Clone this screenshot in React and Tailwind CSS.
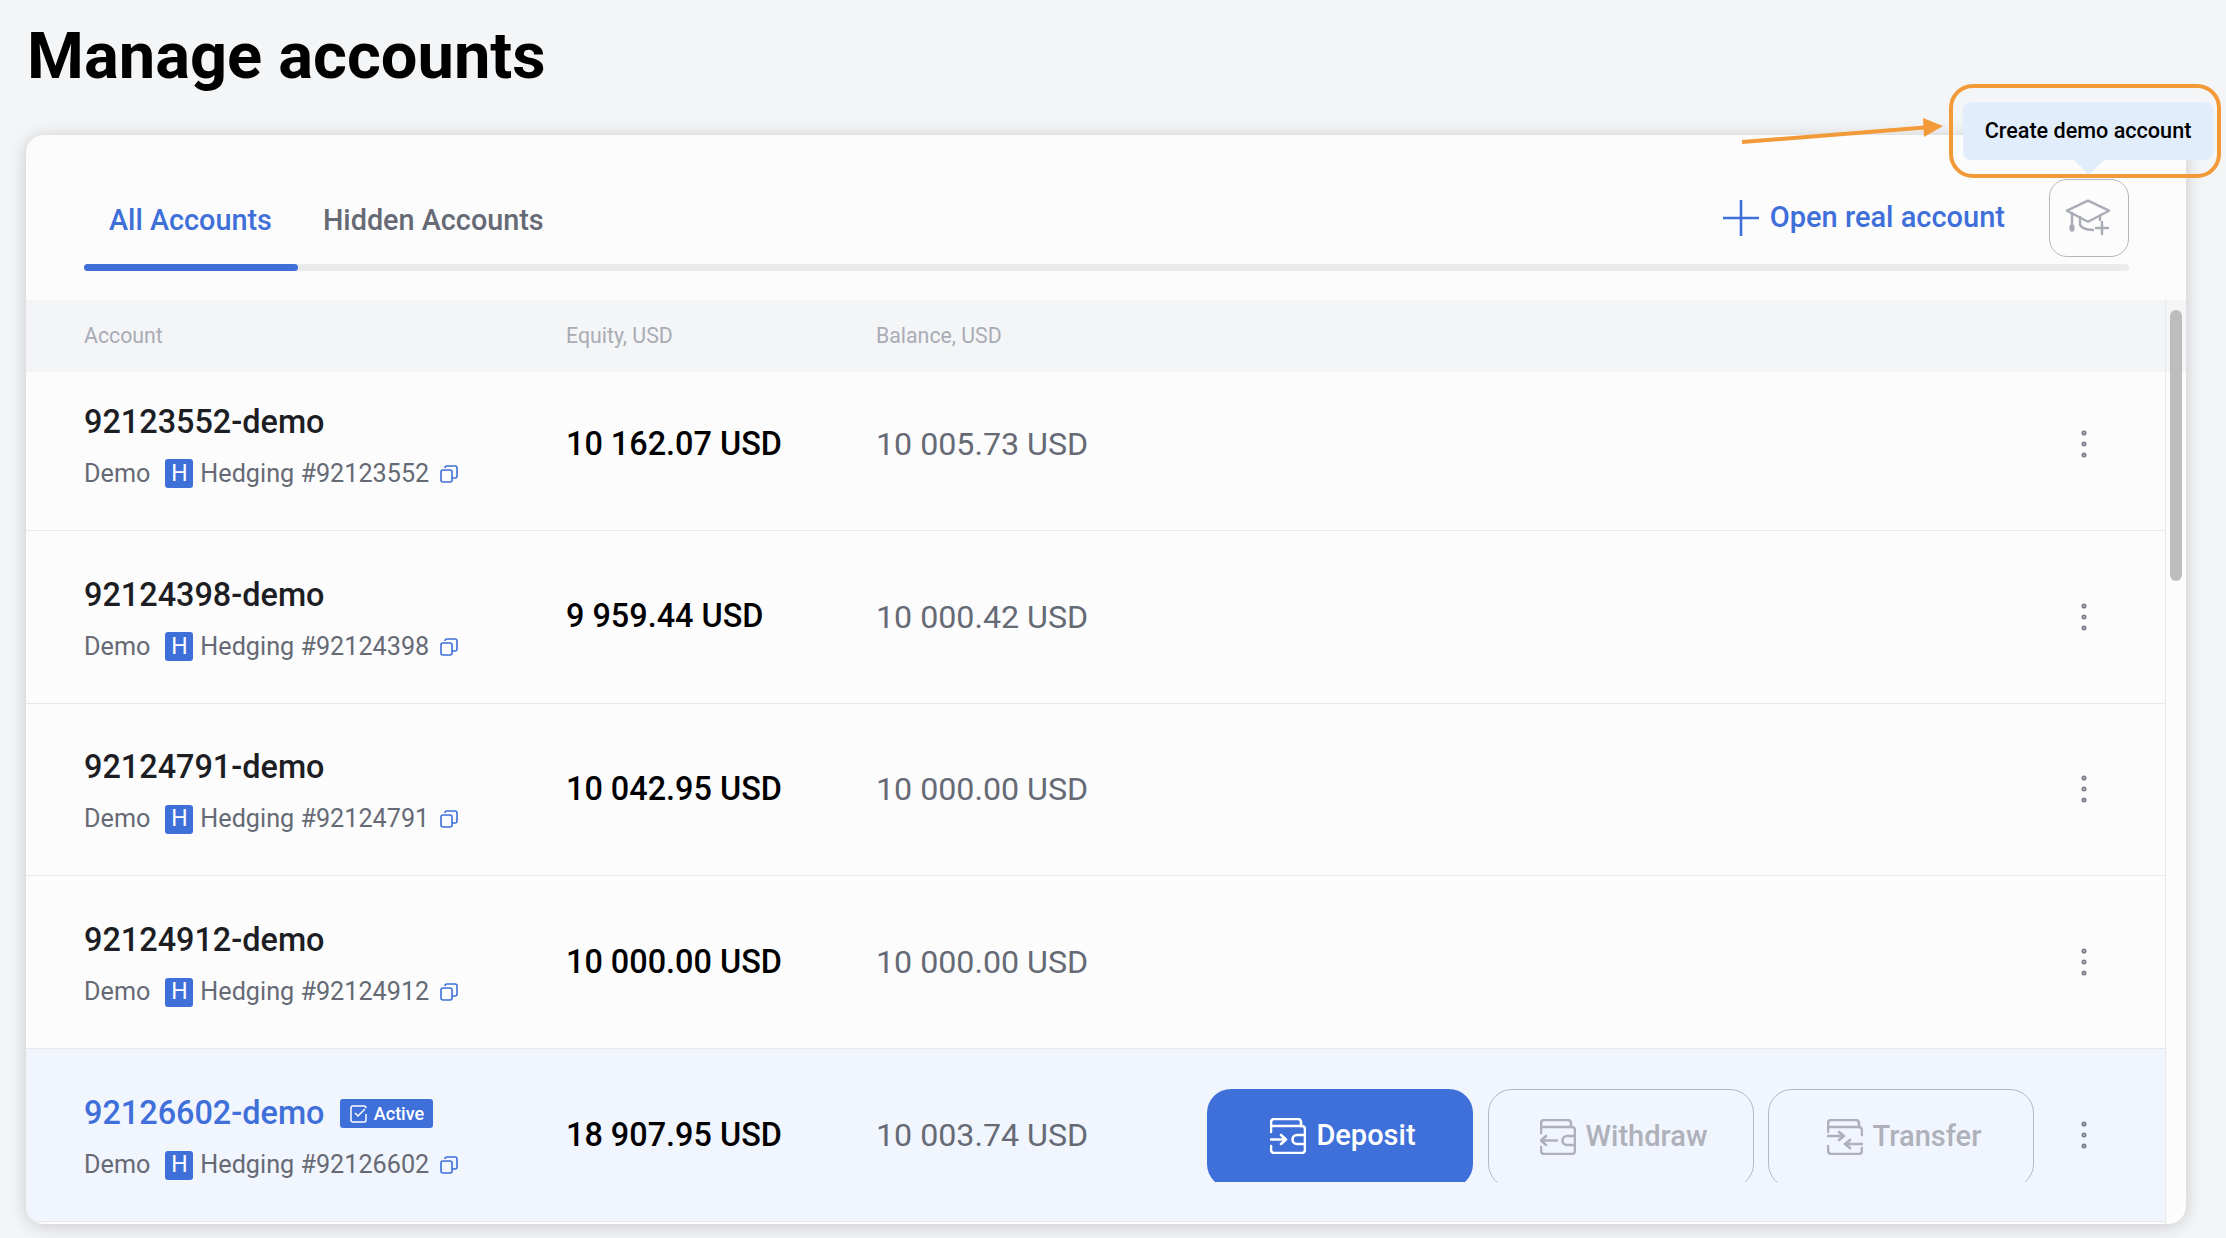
import { MoreVertical } from 'lucide-react'

const ROWS = [
  { name: '92123552-demo', id: '92123552', equity: '10 162.07 USD', balance: '10 005.73 USD' },
  { name: '92124398-demo', id: '92124398', equity: '9 959.44 USD', balance: '10 000.42 USD' },
  { name: '92124791-demo', id: '92124791', equity: '10 042.95 USD', balance: '10 000.00 USD' },
  { name: '92124912-demo', id: '92124912', equity: '10 000.00 USD', balance: '10 000.00 USD' },
  { name: '92126602-demo', id: '92126602', equity: '18 907.95 USD', balance: '10 003.74 USD', active: true },
]

function CopyIcon() {
  return (
    <svg width="18" height="18" viewBox="0 0 18 18" fill="none" stroke="#3f6fd9" strokeWidth="1.6" className="ml-[11px] shrink-0">
      <rect x="1" y="5" width="11" height="12" rx="2" />
      <path d="M5 3V3a2 2 0 0 1 2-2h8a2 2 0 0 1 2 2v8a2 2 0 0 1-2 2h-3" />
    </svg>
  )
}

function WalletIcon({ kind, color }) {
  return (
    <svg width="36" height="36" viewBox="20 13 36 36" fill="none" stroke={color} strokeWidth="2.6" strokeLinecap="round" strokeLinejoin="round" className="shrink-0">
      <path d="M21 27V17a3 3 0 0 1 3-3h24a3 3 0 0 1 3 3v4" />
      <path d="M21 21h31a3 3 0 0 1 3 3v6" />
      <path d="M55 30h-8a4.500 4.500 0 0 0 0 9h8z" />
      <path d="M55 39v6a3 3 0 0 1-3 3H24a3 3 0 0 1-3-3v-4" />
      {kind === 'in' && <path d="M21 34.500h14M31 30l5 4.500-5 4.500" />}
      {kind === 'out' && <path d="M37 34.500H22M26 30l-5 4.500 5 4.500" />}
    </svg>
  )
}

function TransferIcon({ color }) {
  return (
    <svg width="36" height="36" viewBox="11 13 36 36" fill="none" stroke={color} strokeWidth="2.6" strokeLinecap="round" strokeLinejoin="round" className="shrink-0">
      <path d="M12 26V17a3 3 0 0 1 3-3h25a3 3 0 0 1 3 3v4" />
      <path d="M12 21h31a3 3 0 0 1 3 3v5" />
      <path d="M12 40v5a3 3 0 0 0 3 3h28a3 3 0 0 0 3-3v-3" />
      <path d="M12 30h15M23 26l5 4-5 4" />
      <path d="M46 38H30M34 34l-5 4 5 4" />
    </svg>
  )
}

function ActionButton({ primary, icon, label }) {
  return (
    <div className="h-[93px] w-[266px] overflow-hidden">
      <button className={`flex h-[99px] w-full items-start justify-center gap-[10px] rounded-[24px] pt-[29px] pl-[6px] text-[29px] leading-[36px] font-medium ${primary ? 'bg-[#3f6fd9] text-white' : 'border border-[#b4b7c0] text-[#aeb1ba]'}`}>
        {icon}
        <span className="-mt-[1px]">{label}</span>
      </button>
    </div>
  )
}

function AccountRow({ row }) {
  return (
    <div className={`flex h-[172.8px] items-center border-b border-[#e6e8ec] pl-[58px] ${row.active ? 'bg-[#f1f5fd]' : ''}`}>
      <div className="w-[482px] shrink-0 pt-[6px]">
        <div className="flex items-center">
          <span className={`text-[32.4px] leading-[41px] font-medium ${row.active ? 'text-[#3f6fd9]' : 'text-[#1c1e24]'}`}>{row.name}</span>
          {row.active && (
            <span className="ml-[16px] flex h-[29px] w-[93px] items-center justify-center gap-[6px] rounded-[3px] bg-[#3f6fd9] text-[18px] font-medium text-white">
              <svg width="18" height="18" viewBox="0 0 18 18" fill="none" stroke="white" strokeWidth="1.5">
                <path d="M16 9v6a2 2 0 0 1-2 2H3a2 2 0 0 1-2-2V3a2 2 0 0 1 2-2h11a2 2 0 0 1 2 2" />
                <path d="M5 8l3 3 7-7" />
              </svg>
              Active
            </span>
          )}
        </div>
        <div className="mt-[13px] flex items-center text-[25.2px] leading-[36px] text-[#666a75]">
          <span>Demo</span>
          <span className="mr-[7px] ml-[15px] flex h-[29px] w-[28px] items-center justify-center rounded-[3px] bg-[#3f6fd9] text-[23px] text-white">H</span>
          <span>Hedging #{row.id}</span>
          <CopyIcon />
        </div>
      </div>
      <div className="w-[310px] shrink-0 text-[32.4px] font-medium text-black">{row.equity}</div>
      <div className="w-[331px] shrink-0 text-[32.2px] text-[#666a75]">{row.balance}</div>
      {row.active && (
        <div className="flex gap-[14.5px]">
          <ActionButton primary label="Deposit" icon={<WalletIcon kind="in" color="white" />} />
          <ActionButton label="Withdraw" icon={<WalletIcon kind="out" color="#aeb1ba" />} />
          <ActionButton label="Transfer" icon={<TransferIcon color="#aeb1ba" />} />
        </div>
      )}
      <MoreVertical className="mr-[62px] ml-auto h-[38px] w-[38px] text-[#7b7f8a]" strokeWidth={1.2} />
    </div>
  )
}

export default function App() {
  return (
    <div className="relative h-[1238px] overflow-hidden bg-[#f4f5f7] pt-[20px] pl-[26px] font-['Roboto',sans-serif]">
      <h1 className="h-[115px] pl-[1px] text-[65px] leading-[72px] font-bold text-black">Manage accounts</h1>

      <div className="relative w-[2160px] overflow-hidden rounded-[18px] bg-[#fcfcfd] shadow-[0_2px_18px_rgba(0,0,0,0.18)]">
        <div className="relative mx-[58px] mr-[57px] flex h-[165px] items-start pt-[44px]">
          <div className="flex h-[84px] items-center gap-[51px] text-[28.8px]">
            <span className="ml-[25px] font-medium text-[#3f6fd9]">All Accounts</span>
            <span className="font-medium text-[#666a75]">Hidden Accounts</span>
          </div>
          <div className="ml-auto flex items-center">
            <svg width="36" height="36" viewBox="0 0 36 36" stroke="#3f6fd9" strokeWidth="2.6" className="mr-[11px]">
              <path d="M18 0v36M0 18h36" />
            </svg>
            <span className="mr-[44px] text-[29px] font-medium text-[#3f6fd9]">Open real account</span>
            <div className="flex h-[78px] w-[80px] items-center justify-center rounded-[18px] border border-[#b4b7c0]">
              <svg width="60" height="60" viewBox="0 0 60 60" fill="none" stroke="#a9acb5" strokeWidth="2.4" strokeLinejoin="round" strokeLinecap="round" className="mt-[4px]">
                <path d="M8 20.700L29 10.700l21 10-21 11z" />
                <path d="M21 27v7c0 3 5 6 13 6" />
                <path d="M41 26v4" />
                <path d="M13 23v14" />
                <ellipse cx="13" cy="38" rx="1.500" ry="2.500" fill="#a9acb5" />
                <path d="M43 32v12M37 38h12" />
              </svg>
            </div>
          </div>
          <div className="absolute right-0 bottom-[29px] left-0 h-[7px] rounded-full bg-[#eaebed]">
            <div className="h-[7px] w-[214px] rounded-full bg-[#3f6fd9]" />
          </div>
        </div>

        <div className="relative">
          <div className="relative z-10 flex h-[72px] items-center bg-[#f4f5f7] pl-[58px] text-[21.3px] text-[#a9acb5]">
            <span className="w-[482px]">Account</span>
            <span className="w-[310px]">Equity, USD</span>
            <span>Balance, USD</span>
          </div>
          <div className="h-[852px] w-[2139px] overflow-hidden">
            <div className="relative -mt-[14px]">
              {ROWS.map(row => <AccountRow key={row.id} row={row} />)}
            </div>
          </div>
          {/* scrollbar sits over the table edge */}
          <div className="absolute top-0 right-0 bottom-0 z-20 w-[21px] border-l border-[#e6e8ec]">
            <div className="mt-[10px] ml-[4px] h-[271px] w-[12px] rounded-full bg-[#bdbdbd]" />
          </div>
        </div>
      </div>

      {/* tooltip and the orange annotation lie over the page */}
      <div className="absolute top-[102px] left-[1963px] flex h-[58px] w-[250px] items-center justify-center rounded-[8px] bg-[#e2edfc] text-[21.6px] font-medium text-black">
        Create demo account
        <div className="absolute top-[44px] left-[114px] h-[24px] w-[24px] rotate-45 bg-[#e2edfc]" />
      </div>
      <div className="absolute top-[84px] left-[1949px] h-[94px] w-[272px] rounded-[24px] border-[4px] border-[#f29a38]" />
      <svg width="210" height="30" viewBox="0 0 210 30" className="absolute top-[116px] left-[1741px]">
        <path d="M1 26L190 11" stroke="#f29a38" strokeWidth="4" />
        <path d="M182 2L202 10 183 21z" fill="#f29a38" />
      </svg>
    </div>
  )
}
